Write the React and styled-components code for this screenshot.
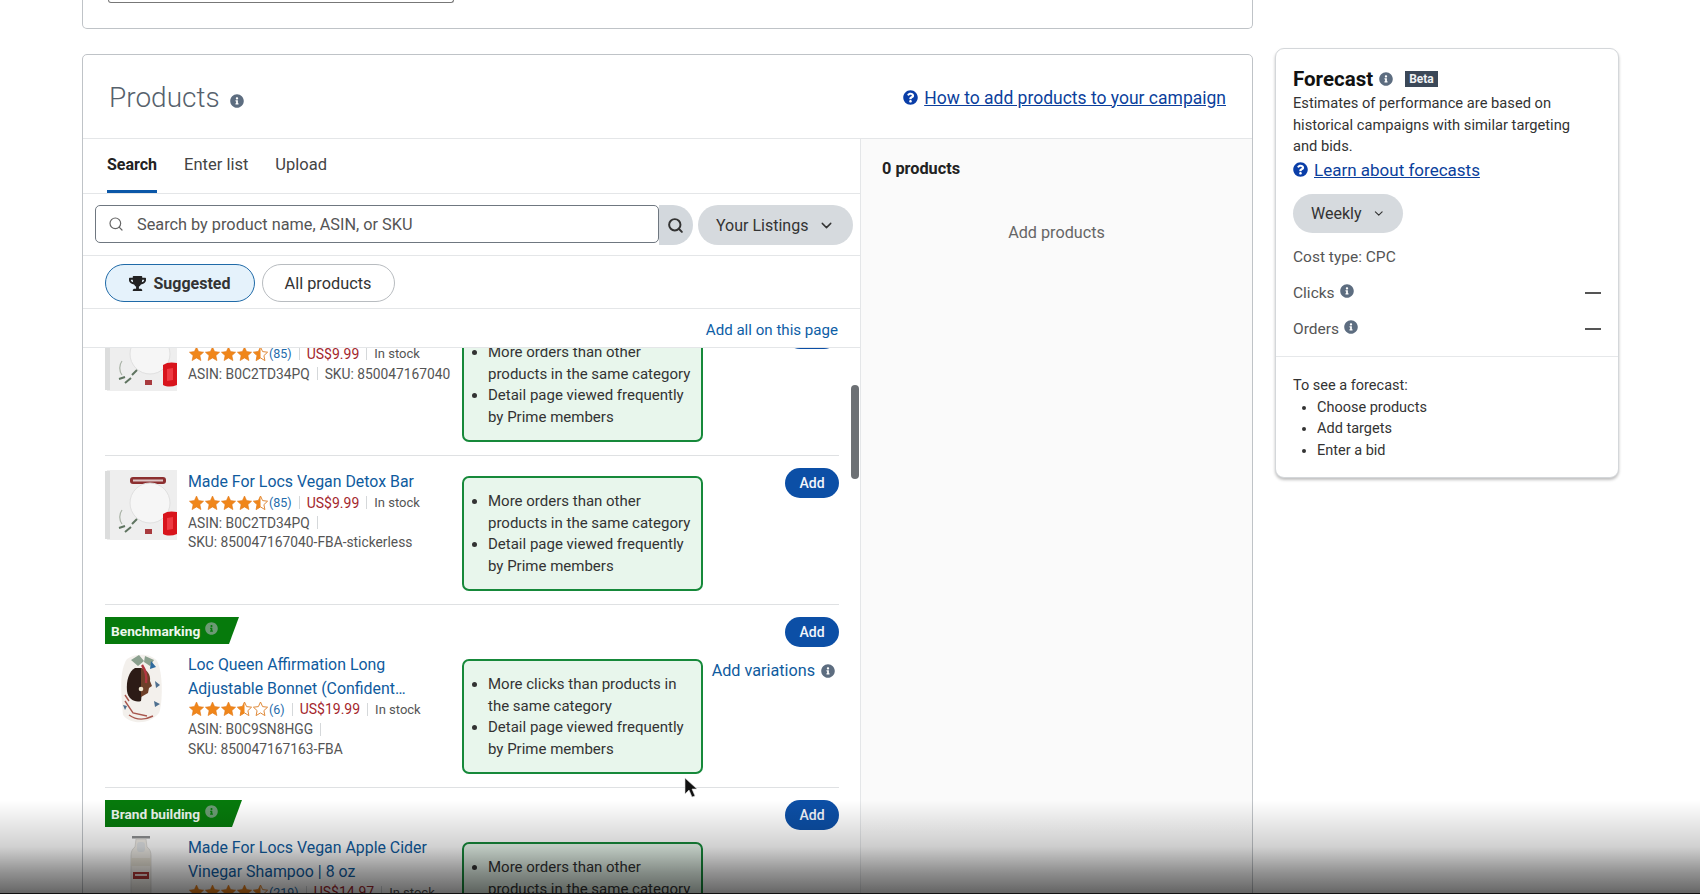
import React from 'react'
import styled, { createGlobalStyle } from 'styled-components'
import { FaInfoCircle, FaQuestionCircle, FaTrophy } from 'react-icons/fa'
import { Search, ChevronDown } from 'lucide-react'

const GlobalStyle = createGlobalStyle`
  html, body { margin: 0; padding: 0; background: #fff; }
  body { font-family: Roboto, "Noto Sans", "Liberation Sans", sans-serif; color: #333; }
  * { box-sizing: border-box; }
`

const Page = styled.div`
  position: relative;
  display: flex;
  gap: 22px;
  height: 894px;
  padding-left: 82px;
  overflow: hidden;
`
const MainCol = styled.div`
  width: 1171px;
  flex: none;
`
const TopCard = styled.div`
  height: 29px;
  border: 1.5px solid #bfc3c7;
  border-top: none;
  border-radius: 0 0 5px 5px;
  padding-left: 25px;
`
const TopInput = styled.div`
  width: 346px;
  height: 3px;
  border: 1.5px solid #777;
  border-top: none;
  border-radius: 0 0 4px 4px;
`
const ProductsCard = styled.section`
  margin-top: 25px;
  height: 860px;
  border: 1.5px solid #bfc3c7;
  border-radius: 5px;
`
const CardHeader = styled.header`
  display: flex;
  align-items: center;
  justify-content: space-between;
  height: 84px;
  padding: 2px 26px 0 26px;
  border-bottom: 1.5px solid #e4e6e8;
`
const Title = styled.h2`
  display: flex;
  align-items: center;
  gap: 10px;
  margin: 0;
  font-size: 28px;
  font-weight: 300;
  color: #56616c;
  svg { margin-top: 6px; }
`
const InfoIcon = styled(FaInfoCircle)`
  flex: none;
  font-size: ${p => p.$size || 14}px;
  color: ${p => p.$color || '#5d6d80'};
`
const HelpLink = styled.a`
  display: flex;
  align-items: center;
  gap: 6px;
  font-size: ${p => p.$size || 17.5}px;
  color: #0b3f9c;
  text-decoration: underline;
  svg { font-size: 15px; color: #0a3ea8; }
`
const Body = styled.div`
  display: grid;
  grid-template-columns: 778px 1fr;
`
const LeftPane = styled.div`
  border-right: 1.5px solid #e4e6e8;
`
const Tabs = styled.div`
  display: flex;
  gap: 27px;
  height: 55px;
  padding-left: 24px;
  border-bottom: 1.5px solid #e4e6e8;
`
const Tab = styled.div`
  display: flex;
  align-items: center;
  height: 100%;
  padding-bottom: 1px;
  font-size: ${p => (p.$active ? 16 : 16.5)}px;
  font-weight: ${p => (p.$active ? 700 : 400)};
  color: ${p => (p.$active ? '#222' : '#444')};
  border-bottom: 3px solid ${p => (p.$active ? '#0b57a8' : 'transparent')};
`
const SearchRow = styled.div`
  display: flex;
  align-items: flex-start;
  height: 62px;
  padding: 11px 0 0 12px;
  border-bottom: 1.5px solid #e4e6e8;
`
const SearchInput = styled.div`
  display: flex;
  align-items: center;
  gap: 13px;
  width: 564px;
  height: 38px;
  padding-left: 12px;
  background: #fff;
  border: 1.5px solid #6f7780;
  border-radius: 5px;
  font-size: 16.3px;
  color: #555;
  svg { color: #666; }
`
const SearchButton = styled.div`
  display: flex;
  align-items: center;
  justify-content: center;
  width: 34px;
  height: 40px;
  padding-right: 1px;
  background: #d3d8dd;
  border-radius: 0 20px 20px 0;
  svg { color: #333; }
`
const GreyPill = styled.div`
  display: flex;
  align-items: center;
  gap: 10px;
  width: ${p => (p.$width ? `${p.$width}px` : 'auto')};
  height: ${p => p.$height || 40}px;
  margin: ${p => p.$top || 0}px 0 0 ${p => p.$left || 0}px;
  padding: 0 18px;
  background: #d6dade;
  border-radius: 20px;
  font-size: 16px;
  color: #333;
`
const FilterRow = styled.div`
  display: flex;
  gap: 6.5px;
  height: 53px;
  padding: 8px 0 0 22px;
  border-bottom: 1.5px solid #e4e6e8;
`
const FilterPill = styled.div`
  display: flex;
  align-items: center;
  justify-content: center;
  gap: 7px;
  width: ${p => p.$width}px;
  height: 38px;
  font-size: ${p => (p.$active ? 16 : 16.3)}px;
  font-weight: ${p => (p.$active ? 700 : 400)};
  color: #333;
  background: ${p => (p.$active ? '#e5f2fb' : '#fff')};
  border: 1.5px solid ${p => (p.$active ? '#1f6aa8' : '#b8bcc0')};
  border-radius: 19px;
  svg { font-size: 17px; color: #222; }
`
const AddAllBar = styled.div`
  display: flex;
  align-items: center;
  justify-content: flex-end;
  height: 39px;
  padding: 4px 22px 0 0;
  border-bottom: 1.5px solid #e4e6e8;
  font-size: 15.1px;
  color: #0d5ea6;
`
const ListViewport = styled.div`
  position: relative;
  height: 560px;
  overflow: hidden;
`
const List = styled.div`
  margin: -41px 21px 0 22px;
`
const Row = styled.div`
  display: grid;
  grid-template-columns: 598px 1fr;
  padding: 12px 0 13px;
  border-bottom: 1.5px solid #dfe1e3;
`
const RowMain = styled.div``
const Tag = styled.div`
  display: flex;
  align-items: center;
  gap: 5px;
  width: ${p => p.$width}px;
  height: 27px;
  margin-bottom: 7px;
  padding-left: 6px;
  background: #067a0c;
  clip-path: polygon(0 0, 100% 0, calc(100% - 10px) 100%, 0 100%);
  font-size: 13.7px;
  font-weight: 700;
  color: #eef7ee;
  svg { margin-top: -5px; font-size: 13px; color: #6b9a74; }
`
const RowBody = styled.div`
  display: grid;
  grid-template-columns: 72px 285px 241px;
`
const Thumb = styled.div`
  width: 72px;
  height: 72px;
  margin-top: 2px;
  svg { display: block; }
`
const Info = styled.div`
  padding: 2px 0 0 11px;
`
const ProductTitle = styled.a`
  display: block;
  font-size: 15.9px;
  line-height: 23.5px;
  color: #0f5b9e;
  margin-bottom: -0.5px;
`
const MetaLine = styled.div`
  display: flex;
  align-items: center;
  height: 19.7px;
  font-size: ${p => p.$size || 13.8}px;
  color: #555;
  white-space: nowrap;
`
const Sep = styled.span`
  width: 1px;
  height: 13px;
  margin: 0 7px;
  background: #d5d8da;
`
const Count = styled.span`
  color: #1e6bab;
  font-size: 12.5px;
`
const Price = styled.span`
  color: #a4262c;
  font-size: 14px;
`
const Insight = styled.ul`
  margin: 8px 0 0;
  height: ${p => p.$height || 115}px;
  padding: 13px 6px 0 24px;
  background: #e8f6ec;
  border: 2px solid #16893a;
  border-radius: 7px;
  font-size: 15px;
  line-height: 21.5px;
  color: #333;
`
const Action = styled.div`
  display: flex;
  flex-direction: column;
  align-items: flex-end;
`
const AddButton = styled.button`
  width: 54px;
  height: 30px;
  padding: 0;
  border: none;
  border-radius: 15px;
  background: #0c4fa6;
  color: #f2f6fb;
  font: 500 14px Roboto, sans-serif;
`
const Variations = styled.div`
  display: flex;
  align-items: center;
  gap: 6px;
  margin: 14px 4px 0 0;
  font-size: 16.2px;
  color: #0f5b9e;
`
const Scrollbar = styled.div`
  position: absolute;
  top: 37px;
  right: 1px;
  width: 8px;
  height: 94px;
  border-radius: 4px;
  background: #6c7074;
`
const RightPane = styled.div`
  background: #fafafa;
  padding: 20px 0 0 21px;
`
const PaneTitle = styled.div`
  font-size: 16.3px;
  font-weight: 700;
  color: #222;
`
const PaneEmpty = styled.div`
  margin: 45px 21px 0 0;
  text-align: center;
  font-size: 16.2px;
  color: #666;
`
const ForecastCard = styled.aside`
  flex: none;
  width: 344px;
  height: 430px;
  margin-top: 48px;
  background: #fff;
  border: 1.5px solid #d4d7da;
  border-radius: 9px;
  box-shadow: 0 2px 3px rgba(0, 0, 0, 0.25);
`
const ForecastTop = styled.div`
  height: 308px;
  padding: 18px 26px 0 17px;
  border-bottom: 1.5px solid #e6e8ea;
`
const ForecastHead = styled.div`
  display: flex;
  align-items: center;
  gap: 6px;
  font-size: 20.5px;
  font-weight: 700;
  color: #111;
`
const Beta = styled.span`
  margin-left: 6px;
  padding: 1px 4px;
  background: #3b4858;
  color: #f0f2f4;
  font-size: 12px;
  font-weight: 700;
`
const Desc = styled.p`
  margin: 2px 0 0;
  font-size: 14.7px;
  line-height: 21.5px;
  color: #333;
`
const LearnRow = styled.div`
  margin-top: 2px;
`
const StatRow = styled.div`
  display: flex;
  align-items: center;
  justify-content: space-between;
  height: ${p => p.$height || 36}px;
  margin-top: ${p => p.$top || 0}px;
  font-size: 15.5px;
  color: #555;
`
const StatLabel = styled.span`
  display: flex;
  align-items: center;
  gap: 5px;
  svg { margin-top: -3px; }
`
const Dash = styled.span`
  width: 16px;
  height: 2px;
  margin-right: -9px;
  background: #555;
`
const ForecastBottom = styled.div`
  padding: 18px 16px 0 17px;
  font-size: 14.5px;
  line-height: 21.5px;
  color: #333;
  ul { margin: 0; padding-left: 24px; }
`
const BottomShade = styled.div`
  position: absolute;
  left: 0;
  right: 0;
  bottom: 0;
  height: 94px;
  border-bottom: 1.5px solid #111;
  background: linear-gradient(to bottom, rgba(0, 0, 0, 0), rgba(0, 0, 0, 0.18) 50%, rgba(0, 0, 0, 0.43) 78%, rgba(0, 0, 0, 0.6));
  pointer-events: none;
`
const Pointer = styled.svg`
  position: absolute;
  left: 684px;
  top: 777px;
`

const STAR = 'M8 1l2.1 4.6 5 .6-3.7 3.4 1 5L8 11.9 3.6 14.6l1-5L.9 6.2l5-.6z'

function Stars({ value }) {
  return (
    <svg width="81" height="16" viewBox="0 0 80 16">
      {[0, 1, 2, 3, 4].map(i => {
        const fill = Math.max(0, Math.min(1, value - i))
        return (
          <g key={i} transform={`translate(${i * 16} 0)`}>
            {fill === 1 && <path d={STAR} fill="#f0861a" stroke="#e0791a" strokeWidth=".6" />}
            {fill === 0 && <path d={STAR} fill="#fff" stroke="#e08a3a" strokeWidth="1" />}
            {fill > 0 && fill < 1 && (
              <>
                <path d={STAR} fill="#fff" stroke="#e08a3a" strokeWidth="1" />
                <path d="M8 1L5.9 5.6l-5 .6 3.7 3.4-1 5L8 11.9z" fill="#f0861a" />
              </>
            )}
          </g>
        )
      })}
    </svg>
  )
}

function SoapBox() {
  return (
    <svg width="72" height="72" viewBox="0 0 72 72">
      <rect x="2" y="0" width="70" height="70" fill="#eeeeee" />
      <rect x="0" y="1" width="5" height="68" fill="#dcdddd" />
      <rect x="25" y="7" width="36" height="7" rx="3" fill="#8c2f30" />
      <rect x="28" y="9.5" width="30" height="2" fill="#dcc5c5" />
      <circle cx="45" cy="33" r="20" fill="#f6f6f6" stroke="#e0e0e0" />
      <path d="M17 40c-3 4-3 10 0 14" stroke="#a9b2a6" strokeWidth="1.2" fill="none" />
      <path d="M14 58l6-2M20 62l6-5M27 54l5-5" stroke="#5f7460" strokeWidth="2" fill="none" />
      <rect x="40" y="59" width="7" height="5" fill="#a83a3e" />
      <path d="M58 44c4-3 9-3 14-2v22c-5 2-10 2-14 0z" fill="#d8141c" />
      <path d="M62 48l6-1v12l-6 1z" fill="#ee3a42" />
    </svg>
  )
}

function Bonnet() {
  return (
    <svg width="72" height="72" viewBox="0 0 72 72">
      <path d="M22 6C30 0 46 0 52 8c6 10 6 42 2 52-10 12-28 12-36 2C16 40 14 18 22 6z" fill="#f3f0ec" />
      <path d="M26 7l8-5 5 6-6 5zM40 3l9 4-4 6-6-4z" fill="#8aa08e" />
      <path d="M46 8l5 6-6 2z" fill="#2f6a9e" />
      <path d="M30 15c-6 3-9 13-8 23 1 8 8 12 14 10l2-18-1-15z" fill="#2c1b16" />
      <path d="M36 15c6 1 10 7 9 13l2 5-3 2-1 5-7 4z" fill="#6e4029" />
      <path d="M37 12c4 6 5 12 4 18" stroke="#b03640" strokeWidth="2.4" fill="none" />
      <circle cx="36" cy="36" r="2.3" fill="#efe6cf" />
      <path d="M20 48l8 12 14 3M24 62c7 5 16 5 24 1M20 42l4 6" stroke="#a8574e" strokeWidth="1.4" fill="none" />
      <path d="M50 28l5 4-4 3zM49 48l6 3-5 3zM18 52l4 1-2 4z" fill="#4e6f8f" />
    </svg>
  )
}

function Bottle() {
  return (
    <svg width="72" height="72" viewBox="0 0 72 72">
      <rect x="27" y="0" width="18" height="2.5" fill="#8d8f90" />
      <path d="M31 3h10l1 8c3 2 4 5 4 9v44h-20V20c0-4 1-7 4-9z" fill="#efece6" stroke="#d0cfca" strokeWidth=".7" />
      <rect x="32" y="6" width="8" height="10" rx="3" fill="#dfe2e4" />
      <rect x="26" y="22" width="20" height="8" fill="#e5e0d4" />
      <rect x="28" y="36" width="16" height="7" fill="#a93533" />
      <rect x="30" y="38" width="12" height="2" fill="#e6d0cc" />
    </svg>
  )
}

const ROWS = [
  {
    id: 1,
    title: 'Made For Locs Vegan Detox Bar',
    thumb: <SoapBox />,
    rating: 4.5,
    count: 85,
    price: 'US$9.99',
    asin: 'B0C2TD34PQ',
    sku: '850047167040',
    inline: true,
    bullets: ['More orders than other products in the same category', 'Detail page viewed frequently by Prime members']
  },
  {
    id: 2,
    title: 'Made For Locs Vegan Detox Bar',
    thumb: <SoapBox />,
    rating: 4.5,
    count: 85,
    price: 'US$9.99',
    asin: 'B0C2TD34PQ',
    sku: '850047167040-FBA-stickerless',
    bullets: ['More orders than other products in the same category', 'Detail page viewed frequently by Prime members']
  },
  {
    id: 3,
    tag: 'Benchmarking',
    tagWidth: 134,
    title: 'Loc Queen Affirmation Long Adjustable Bonnet (Confident…',
    thumb: <Bonnet />,
    rating: 3.5,
    count: 6,
    price: 'US$19.99',
    asin: 'B0C9SN8HGG',
    sku: '850047167163-FBA',
    variations: true,
    height: 115,
    bullets: ['More clicks than products in the same category', 'Detail page viewed frequently by Prime members']
  },
  {
    id: 4,
    tag: 'Brand building',
    tagWidth: 137,
    title: 'Made For Locs Vegan Apple Cider Vinegar Shampoo | 8 oz',
    thumb: <Bottle />,
    rating: 4.5,
    count: 219,
    price: 'US$14.97',
    asin: 'B0C2TD34PQ',
    sku: '850047167040',
    bullets: ['More orders than other products in the same category', 'Detail page viewed frequently by Prime members']
  }
]

function ProductRow({ row }) {
  return (
    <Row>
      <RowMain>
        {row.tag && (
          <Tag $width={row.tagWidth}>
            {row.tag}
            <FaInfoCircle />
          </Tag>
        )}
        <RowBody>
          <Thumb>{row.thumb}</Thumb>
          <Info>
            <ProductTitle>{row.title}</ProductTitle>
            <MetaLine $size={13}>
              <Stars value={row.rating} />
              <Count>({row.count})</Count>
              <Sep />
              <Price>{row.price}</Price>
              <Sep />
              In stock
            </MetaLine>
            {row.inline ? (
              <MetaLine>
                ASIN: {row.asin}
                <Sep />
                SKU: {row.sku}
              </MetaLine>
            ) : (
              <>
                <MetaLine>
                  ASIN: {row.asin}
                  <Sep />
                </MetaLine>
                <MetaLine>SKU: {row.sku}</MetaLine>
              </>
            )}
          </Info>
          <Insight $height={row.height}>
            {row.bullets.map(b => (
              <li key={b}>{b}</li>
            ))}
          </Insight>
        </RowBody>
      </RowMain>
      <Action>
        <AddButton>Add</AddButton>
        {row.variations && (
          <Variations>
            Add variations
            <InfoIcon />
          </Variations>
        )}
      </Action>
    </Row>
  )
}

export default function App() {
  return (
    <Page>
      <GlobalStyle />
      <MainCol>
        <TopCard>
          <TopInput />
        </TopCard>
        <ProductsCard>
          <CardHeader>
            <Title>
              Products
              <InfoIcon />
            </Title>
            <HelpLink>
              <FaQuestionCircle />
              How to add products to your campaign
            </HelpLink>
          </CardHeader>
          <Body>
            <LeftPane>
              <Tabs>
                <Tab $active>Search</Tab>
                <Tab>Enter list</Tab>
                <Tab>Upload</Tab>
              </Tabs>
              <SearchRow>
                <SearchInput>
                  <Search size={16} strokeWidth={1.8} />
                  Search by product name, ASIN, or SKU
                </SearchInput>
                <SearchButton>
                  <Search size={17} strokeWidth={2.8} />
                </SearchButton>
                <GreyPill $left={5}>
                  Your Listings
                  <ChevronDown size={17} />
                </GreyPill>
              </SearchRow>
              <FilterRow>
                <FilterPill $active $width={150}>
                  <FaTrophy />
                  Suggested
                </FilterPill>
                <FilterPill $width={133}>All products</FilterPill>
              </FilterRow>
              <AddAllBar>Add all on this page</AddAllBar>
              <ListViewport>
                <List>
                  {ROWS.map(row => (
                    <ProductRow key={row.id} row={row} />
                  ))}
                </List>
                <Scrollbar />
              </ListViewport>
            </LeftPane>
            <RightPane>
              <PaneTitle>0 products</PaneTitle>
              <PaneEmpty>Add products</PaneEmpty>
            </RightPane>
          </Body>
        </ProductsCard>
      </MainCol>
      <ForecastCard>
        <ForecastTop>
          <ForecastHead>
            Forecast
            <InfoIcon />
            <Beta>Beta</Beta>
          </ForecastHead>
          <Desc>Estimates of performance are based on historical campaigns with similar targeting and bids.</Desc>
          <LearnRow>
            <HelpLink $size={17}>
              <FaQuestionCircle />
              Learn about forecasts
            </HelpLink>
          </LearnRow>
          <GreyPill $height={39} $width={110} $top={14}>
            Weekly
            <ChevronDown size={17} />
          </GreyPill>
          <StatRow $height={35} $top={7}>Cost type: CPC</StatRow>
          <StatRow>
            <StatLabel>
              Clicks
              <InfoIcon />
            </StatLabel>
            <Dash />
          </StatRow>
          <StatRow>
            <StatLabel>
              Orders
              <InfoIcon />
            </StatLabel>
            <Dash />
          </StatRow>
        </ForecastTop>
        <ForecastBottom>
          To see a forecast:
          <ul>
            <li>Choose products</li>
            <li>Add targets</li>
            <li>Enter a bid</li>
          </ul>
        </ForecastBottom>
      </ForecastCard>
      <BottomShade />
      <Pointer width="14" height="22" viewBox="0 0 14 22">
        <path d="M1 1v16l4-4 3 7 3-1-3-7h5z" fill="#111" stroke="#ddd" strokeWidth=".6" />
      </Pointer>
    </Page>
  )
}
